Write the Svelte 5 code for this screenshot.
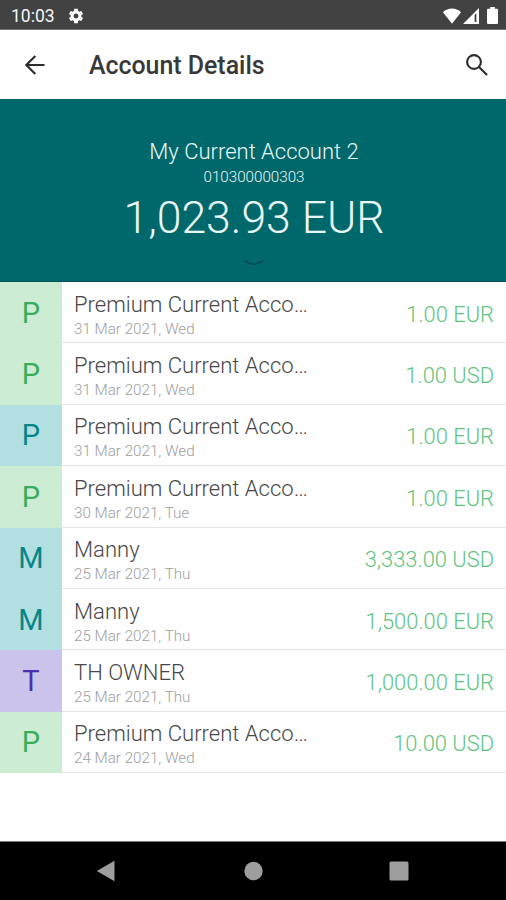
<script lang="ts">
  type Tone = "green" | "teal" | "violet";

  interface Transaction {
    name: string;
    date: string;
    amount: string;
    tone: Tone;
  }

  const account = {
    name: "My Current Account 2",
    number: "010300000303",
    balance: "1,023.93 EUR",
  };

  const transactions: Transaction[] = [
    { name: "Premium Current Acco…", date: "31 Mar 2021, Wed", amount: "1.00 EUR", tone: "green" },
    { name: "Premium Current Acco…", date: "31 Mar 2021, Wed", amount: "1.00 USD", tone: "green" },
    { name: "Premium Current Acco…", date: "31 Mar 2021, Wed", amount: "1.00 EUR", tone: "teal" },
    { name: "Premium Current Acco…", date: "30 Mar 2021, Tue", amount: "1.00 EUR", tone: "green" },
    { name: "Manny", date: "25 Mar 2021, Thu", amount: "3,333.00 USD", tone: "teal" },
    { name: "Manny", date: "25 Mar 2021, Thu", amount: "1,500.00 EUR", tone: "teal" },
    { name: "TH OWNER", date: "25 Mar 2021, Thu", amount: "1,000.00 EUR", tone: "violet" },
    { name: "Premium Current Acco…", date: "24 Mar 2021, Wed", amount: "10.00 USD", tone: "green" },
  ];
</script>

<div class="screen">
  <div class="status-bar">
    <span class="clock">10:03</span>
    <svg class="gear" viewBox="0 0 24 24" aria-hidden="true">
      <path d="M19.14 12.94c.04-.3.06-.61.06-.94s-.02-.64-.07-.94l2.03-1.58c.18-.14.23-.41.12-.61l-1.92-3.32c-.12-.22-.37-.29-.59-.22l-2.39.96c-.5-.38-1.03-.7-1.62-.94l-.36-2.54c-.04-.24-.24-.41-.48-.41h-3.84c-.24 0-.43.17-.47.41l-.36 2.54c-.59.24-1.13.57-1.62.94l-2.39-.96c-.22-.08-.47 0-.59.22L2.74 8.87c-.12.21-.08.47.12.61l2.03 1.58c-.05.3-.09.63-.09.94s.02.64.07.94l-2.03 1.58c-.18.14-.23.41-.12.61l1.92 3.32c.12.22.37.29.59.22l2.39-.96c.5.38 1.03.7 1.62.94l.36 2.54c.05.24.24.41.48.41h3.84c.24 0 .44-.17.47-.41l.36-2.54c.59-.24 1.13-.56 1.62-.94l2.39.96c.22.08.47 0 .59-.22l1.92-3.32c.12-.22.07-.47-.12-.61l-2.01-1.58zM12 15.2c-1.77 0-3.2-1.43-3.2-3.2s1.43-3.2 3.2-3.2 3.2 1.43 3.2 3.2-1.43 3.2-3.2 3.2z" />
    </svg>
    <div class="indicators">
      <svg width="18" height="16" viewBox="0 0 18 16" aria-hidden="true">
        <path d="M9 15.8 0 4.3C5-.7 13-.7 18 4.3z" />
      </svg>
      <svg width="16" height="16" viewBox="0 0 16 16" aria-hidden="true">
        <path fill-rule="evenodd" d="M16 0v16H0zM11.6 7v7h1.8V5.2z" />
      </svg>
      <svg class="battery" width="11" height="17" viewBox="0 0 11 17" aria-hidden="true">
        <path d="M3.2 0h4.6v1.8H10q1 0 1 1V16q0 1-1 1H1q-1 0-1-1V2.8q0-1 1-1h2.2z" />
      </svg>
    </div>
  </div>

  <header class="app-bar">
    <button type="button" aria-label="Back">
      <svg width="20" height="20" viewBox="0 0 20 20" aria-hidden="true">
        <path d="M19.5 10H1.6M10.3 1 1.3 10l9 9" />
      </svg>
    </button>
    <h1>Account Details</h1>
    <button type="button" aria-label="Search">
      <svg width="22" height="22" viewBox="0 0 22 22" aria-hidden="true">
        <circle cx="8" cy="8" r="6.9" />
        <path d="m13 13 8 8" />
      </svg>
    </button>
  </header>

  <section class="summary">
    <div class="account-name">{account.name}</div>
    <div class="account-number">{account.number}</div>
    <div class="balance">{account.balance}</div>
    <svg class="expand" width="20" height="6" viewBox="0 0 20 6" aria-hidden="true">
      <path d="M.5 1 10 4.6 19.5 1" />
    </svg>
  </section>

  <ul class="transactions">
    {#each transactions as tx}
      <li>
        <div class="avatar {tx.tone}">{tx.name[0]}</div>
        <div class="details">
          <div class="text">
            <div class="name">{tx.name}</div>
            <div class="date">{tx.date}</div>
          </div>
          <div class="amount">{tx.amount}</div>
        </div>
      </li>
    {/each}
  </ul>

  <nav class="nav-bar">
    <svg width="20" height="22" viewBox="0 0 20 22" aria-hidden="true">
      <path d="M18.5.8v20.4L.8 11z" />
    </svg>
    <svg width="20" height="20" viewBox="0 0 20 20" aria-hidden="true">
      <circle cx="10.5" cy="10" r="9.2" />
    </svg>
    <svg width="20" height="20" viewBox="0 0 20 20" aria-hidden="true">
      <rect x=".5" y=".5" width="19" height="19" rx="1.5" />
    </svg>
  </nav>
</div>

<style>
  :global(body) {
    margin: 0;
  }

  .screen {
    display: flex;
    flex-direction: column;
    width: 506px;
    height: 900px;
    overflow: hidden;
    background: #fefefe;
    font-family: Roboto, "Liberation Sans", sans-serif;
  }

  svg {
    display: block;
    flex-shrink: 0;
  }

  .status-bar {
    display: flex;
    align-items: center;
    flex-shrink: 0;
    box-sizing: border-box;
    height: 30px;
    padding: 2px 8px 0 11px;
    background: #424242;
    border-bottom: 1px solid #777;
    color: #f4f4f4;
    fill: #fff;
  }

  .clock {
    width: 56px;
    padding-top: 1px;
    font-size: 17.5px;
    line-height: 26px;
  }

  .gear {
    width: 18px;
    height: 18px;
  }

  .indicators {
    display: flex;
    align-items: center;
    gap: 2px;
    margin-left: auto;
  }

  .battery {
    margin-left: 6px;
  }

  .app-bar {
    display: flex;
    align-items: center;
    flex-shrink: 0;
    box-sizing: border-box;
    height: 69px;
    padding: 0 18px 0 25px;
  }

  .app-bar button {
    padding: 0;
    border: 0;
    background: none;
  }

  .app-bar svg {
    fill: none;
    stroke: #2c2c2c;
    stroke-width: 2.1;
  }

  h1 {
    flex: 1;
    margin: 2px 0 0 44px;
    color: #383838;
    font-size: 24.9px;
    font-weight: 500;
    line-height: 32px;
  }

  .summary {
    display: flex;
    flex-direction: column;
    align-items: center;
    flex-shrink: 0;
    box-sizing: border-box;
    height: 183px;
    padding-top: 38px;
    padding-left: 2px;
    background: #00686b;
    border-bottom: 1px solid #005458;
    color: #e9f6f6;
    font-weight: 300;
  }

  .account-name {
    font-size: 22px;
    line-height: 29px;
  }

  .account-number {
    margin-top: 1px;
    font-size: 15.2px;
    line-height: 20px;
  }

  .balance {
    font-size: 44.5px;
    line-height: 62px;
  }

  .expand {
    margin-top: 11px;
    fill: none;
    stroke: #00494d;
    stroke-width: 1.5;
  }

  .transactions {
    flex: 1;
    margin: 0;
    padding: 0;
    list-style: none;
  }

  li {
    display: flex;
    height: 61.4px;
  }

  .avatar {
    display: flex;
    align-items: center;
    justify-content: center;
    width: 62px;
    font-size: 29px;
  }

  .green {
    background: #ccecd3;
    color: #3bac5b;
  }

  .teal {
    background: #b2dfe2;
    color: #078587;
  }

  .violet {
    background: #cbc3ec;
    color: #4a2fae;
  }

  .details {
    display: flex;
    align-items: center;
    justify-content: space-between;
    flex: 1;
    box-sizing: border-box;
    padding: 5px 12px 0 12px;
    border-bottom: 1px solid #e6e6e6;
    font-weight: 300;
  }

  .name {
    color: #484848;
    font-size: 22.05px;
    line-height: 28px;
  }

  .date {
    color: #a0a0a0;
    font-size: 15.2px;
    line-height: 20px;
  }

  .amount {
    color: #5fc480;
    font-size: 21.9px;
    line-height: 30px;
  }

  .nav-bar {
    display: flex;
    align-items: center;
    justify-content: space-between;
    flex-shrink: 0;
    box-sizing: border-box;
    height: 59px;
    padding: 0 97px 0 96px;
    background: #000;
    border-top: 1px solid #777;
    fill: #9e9e9e;
  }
</style>
